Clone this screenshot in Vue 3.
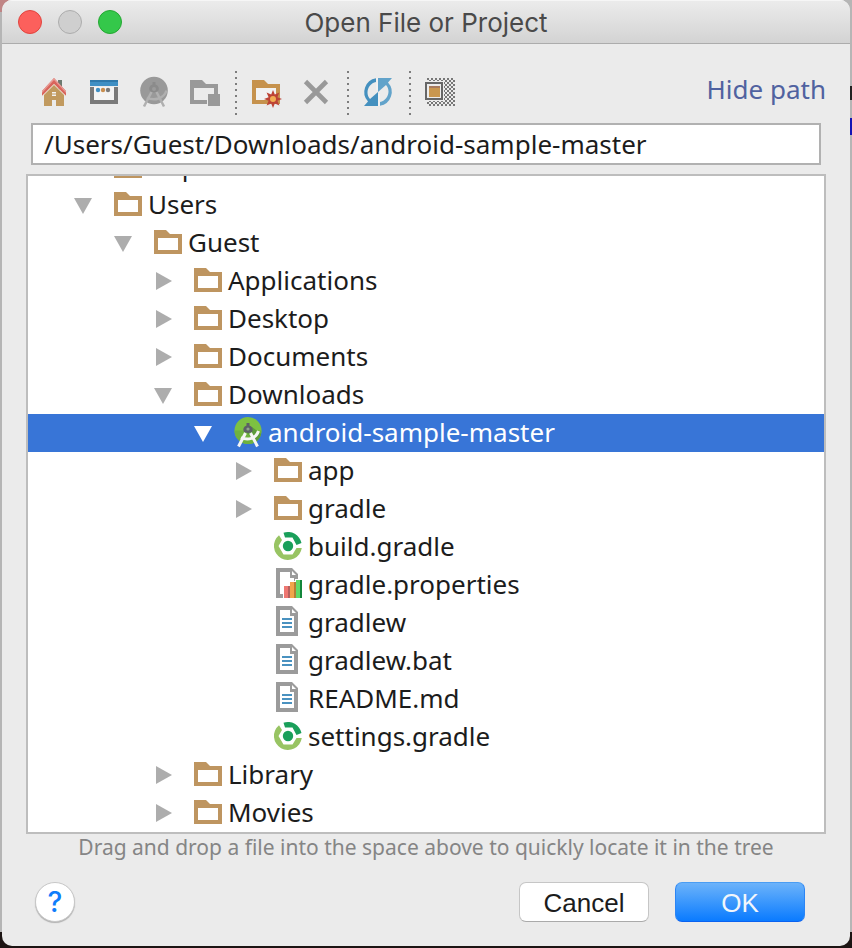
<script setup>
import { ref } from 'vue'

const path = ref('/Users/Guest/Downloads/android-sample-master')
const pathVisible = ref(true)

const tools = [
  { icon: 'home', label: 'Home directory' },
  { icon: 'desktop', label: 'Desktop directory' },
  { icon: 'studio', label: 'Project directory', disabled: true },
  { icon: 'module', label: 'Module directory', disabled: true },
  { separator: true },
  { icon: 'newfolder', label: 'New folder' },
  { icon: 'delete', label: 'Delete' },
  { separator: true },
  { icon: 'refresh', label: 'Refresh' },
  { separator: true },
  { icon: 'hidden', label: 'Show hidden files' }
]

const rows = [
  { name: 'tmp', icon: 'folder', depth: 0 },
  { name: 'Users', icon: 'folder', depth: 0, state: 'open' },
  { name: 'Guest', icon: 'folder', depth: 1, state: 'open' },
  { name: 'Applications', icon: 'folder', depth: 2, state: 'closed' },
  { name: 'Desktop', icon: 'folder', depth: 2, state: 'closed' },
  { name: 'Documents', icon: 'folder', depth: 2, state: 'closed' },
  { name: 'Downloads', icon: 'folder', depth: 2, state: 'open' },
  { name: 'android-sample-master', icon: 'studio', depth: 3, state: 'open', selected: true },
  { name: 'app', icon: 'folder', depth: 4, state: 'closed' },
  { name: 'gradle', icon: 'folder', depth: 4, state: 'closed' },
  { name: 'build.gradle', icon: 'gradle', depth: 4 },
  { name: 'gradle.properties', icon: 'properties', depth: 4 },
  { name: 'gradlew', icon: 'file', depth: 4 },
  { name: 'gradlew.bat', icon: 'file', depth: 4 },
  { name: 'README.md', icon: 'file', depth: 4 },
  { name: 'settings.gradle', icon: 'gradle', depth: 4 },
  { name: 'Library', icon: 'folder', depth: 2, state: 'closed' },
  { name: 'Movies', icon: 'folder', depth: 2, state: 'closed' }
]
</script>

<template>
  <div class="desktop">
    <main class="dialog">
      <header class="titlebar">
        <div class="lights">
          <button class="light close" aria-label="Close"></button>
          <button class="light minimize" aria-label="Minimize" disabled></button>
          <button class="light zoom" aria-label="Zoom"></button>
        </div>
        <h1>Open File or Project</h1>
        <div class="balance"></div>
      </header>

      <div class="toolbar">
        <template v-for="(tool, i) in tools" :key="i">
          <span v-if="tool.separator" class="separator"></span>
          <button v-else class="tool" :aria-label="tool.label" :disabled="tool.disabled">
            <svg v-if="tool.icon === 'home'" class="icon" viewBox="0 0 32 32">
              <path d="M20 4h4v10h-4z" fill="#6d7a70" />
              <path d="M16 8 26 18v12h-8v-6h-4v6H6V18z" fill="#c19a5f" />
              <path d="M14 16h4v1.500h-4zM14 18.500h4V20h-4z" fill="#f2f2f2" />
              <path d="M16 2 28 15v5L16 8 4 20v-5z" fill="#d9655c" />
              <path d="M16 2 28 15v2L16 4 4 17v-2z" fill="#e79a94" />
              <path d="M4 20.500 16 8.500l12 12" fill="none" stroke="#efe7dc" stroke-width="1" />
            </svg>
            <svg v-else-if="tool.icon === 'desktop'" class="icon" viewBox="0 0 32 32">
              <path d="M6 11h20v13H6z" fill="#f4f4f4" />
              <path d="M2 11h4v13h20V11h4v17H2z" fill="#7a7a7a" />
              <path d="M2 4h28v6H2z" fill="#3f8fc4" />
              <path d="M2 4h28v2H2z" fill="#2f78aa" />
              <circle cx="10" cy="14" r="2.200" fill="#3f8fc4" />
              <circle cx="15" cy="14" r="2.200" fill="#c98f50" />
              <circle cx="20" cy="14" r="2.200" fill="#7a7a7a" />
            </svg>
            <svg v-else-if="tool.icon === 'studio'" class="icon" viewBox="0 0 32 32">
              <circle cx="16" cy="14.500" r="13.800" fill="#999" />
              <path d="M14.500 6h3v2.500a4.500 4.500 0 0 1 2.500 7l-4 1-4-1a4.500 4.500 0 0 1 2.500-7z" fill="#8b8b8b" />
              <path d="M13.500 16 6 30.500M18.500 16 26 30.500M9 21.500c7 4 17 1 19.500-7" fill="none" stroke="#b0b0b0" stroke-width="2.500" />
              <circle cx="16" cy="13" r="2" fill="#9b9b9b" />
            </svg>
            <svg v-else-if="tool.icon === 'module'" class="icon" viewBox="0 0 32 32">
              <path d="M2 4h12l4 4h12v10h-4v-6H6v12h13v4H2z" fill="#999" />
              <path d="M20 18h12v12H20z" fill="#999" />
            </svg>
            <svg v-else-if="tool.icon === 'newfolder'" class="icon" viewBox="0 0 32 32">
              <path d="M6 12h20v12H6z" fill="#f2f2f2" />
              <path d="M2 4h12l4 4h12v20H2zM6 12v12h20V12z" fill="#c6924d" fill-rule="evenodd" />
              <path d="m23 14 1.800 4.600L29.400 16.600l-2 4.600L32 23l-4.600 1.800 2 4.600-4.600-2L23 32l-1.800-4.600-4.600 2 2-4.600L14 23l4.600-1.800-2-4.600 4.600 2z" fill="#bd4335" />
              <circle cx="23" cy="23" r="3" fill="#f2ad53" />
            </svg>
            <svg v-else-if="tool.icon === 'delete'" class="icon" viewBox="0 0 32 32">
              <path d="m5.500 5.500 21 21M26.500 5.500l-21 21" stroke="#999" stroke-width="4.600" />
            </svg>
            <svg v-else-if="tool.icon === 'refresh'" class="icon" viewBox="0 0 32 32">
              <path d="M14 2.200V6C9 7 5.500 11.500 5.500 16.500c0 2.500.8 4.500 2.500 6.500l8-7v14H2l4-4.500A14 14 0 0 1 14 2.200z" fill="#4490bf" />
              <path d="M18 29.800V26c5-1 8.500-5.500 8.500-10.500 0-2.500-.8-4.500-2.500-6.500l-8 7V2h14l-4 4.500A14 14 0 0 1 18 29.800z" fill="#62a3ca" />
              <path d="M15 2v12M17 18v12" stroke="#f3f3f3" stroke-width="1.500" />
            </svg>
            <svg v-else class="icon" viewBox="0 0 32 32">
              <defs>
                <pattern id="checks" width="4" height="4" x="3" y="2" patternUnits="userSpaceOnUse">
                  <path d="M0 0h2v2H0zM2 2h2v2H2z" fill="#777" />
                </pattern>
              </defs>
              <path d="M3 2h28v28H3z" fill="url(#checks)" />
              <path d="M0 5h20v20H0z" fill="#ececec" />
              <path d="M2 7h16v16H2z" fill="#ececec" stroke="#666" stroke-width="2" />
              <path d="M5 10h11v11H5z" fill="#c9974f" />
              <path d="M5 10h11v2H5z" fill="#a87b5e" />
            </svg>
          </button>
        </template>
        <a class="toggle-path" href="#" @click.prevent="pathVisible = !pathVisible">Hide path</a>
      </div>

      <input v-if="pathVisible" v-model="path" class="path" type="text" aria-label="Path" spellcheck="false" />

      <ul class="tree" role="tree" aria-label="Files">
        <li
          v-for="row in rows"
          :key="row.name"
          class="row"
          :class="[{ selected: row.selected }, 'depth-' + row.depth]"
          role="treeitem"
          :aria-selected="!!row.selected"
        >
          <button v-if="row.state" class="arrow" :aria-label="'Toggle ' + row.name">
            <svg viewBox="0 0 18 18">
              <path v-if="row.state === 'open'" d="M0 2h18L9 18z" fill="currentColor" />
              <path v-else d="M2 0v18l16-9z" fill="currentColor" />
            </svg>
          </button>
          <span v-else class="arrow"></span>

          <svg v-if="row.icon === 'folder'" class="icon" viewBox="0 0 32 32">
            <path d="M2 3h12l4 4h12v20H2zM6 11v12h20V11z" fill="#be9560" fill-rule="evenodd" />
          </svg>
          <svg v-else-if="row.icon === 'studio'" class="icon" viewBox="0 0 32 32">
            <circle cx="16" cy="13.500" r="13.500" fill="#7dc142" />
            <path d="M2.500 13.500a13.500 13.500 0 0 0 27 0z" fill="#6fb23d" />
            <path d="m14 15 10 10a13.500 13.500 0 0 0 5-8l-9-7z" fill="#5c9b3b" />
            <path d="M14.500 6h3v2.500a4.300 4.300 0 0 1 2.500 6.500l-4 1-4-1a4.300 4.300 0 0 1 2.500-6.500z" fill="#5c6066" />
            <path d="M13.500 16 6.500 29.500M18.500 16 25.500 29.500" fill="none" stroke="#f5f5f5" stroke-width="3" />
            <path d="M9 20.500c7 3.500 15 1 17.500-6.500" fill="none" stroke="#f5f5f5" stroke-width="3" />
            <circle cx="16" cy="12" r="1.600" fill="#8fa28a" />
          </svg>
          <svg v-else-if="row.icon === 'gradle'" class="icon" viewBox="0 0 32 32">
            <path d="M7 4.200A14 14 0 1 0 29.800 17h-5.300l-4 6.500h-9L6.500 15l3.500-6z" fill="#98c463" />
            <path d="M11.500 1.700A14 14 0 0 1 29.500 12L24.500 14 20.500 6.500H13z" fill="#1a9f5a" />
            <circle cx="16" cy="15" r="5.200" fill="#1a9f5a" />
          </svg>
          <svg v-else class="icon" viewBox="0 0 32 32">
            <path d="M4-1h16l6 6v24H4zM8 3v22h14V9h-4V3z" fill="#9b9b9b" fill-rule="evenodd" />
            <path d="M20 2v4h4z" fill="#fff" />
            <path v-if="row.icon === 'file'" d="M10 11h10v2H10zM10 15h10v2H10zM10 19h10v2H10z" fill="#4a92c0" />
            <g v-else>
              <path d="M11 16h6v-4h6v-2h4v19H11z" fill="#fff" />
              <path d="M12 17h6v12h-6z" fill="#ee7772" />
              <path d="M16 17h2v12h-2z" fill="#b5605e" />
              <path d="M18 13h6v16h-6z" fill="#f0a649" />
              <path d="M22 13h2v16h-2z" fill="#b47f35" />
              <path d="M24 11h6v18h-6z" fill="#5fdb68" />
              <path d="M28 11h2v18h-2z" fill="#12863a" />
            </g>
          </svg>
          <span class="name">{{ row.name }}</span>
        </li>
      </ul>

      <p class="hint">Drag and drop a file into the space above to quickly locate it in the tree</p>

      <footer class="actions">
        <button class="help" aria-label="Help">?</button>
        <button class="btn">Cancel</button>
        <button class="btn primary">OK</button>
      </footer>
    </main>
  </div>
</template>

<style>
body {
  margin: 0;
}
</style>

<style scoped>
.desktop {
  box-sizing: border-box;
  height: 100vh;
  min-height: 480px;
  padding: 0 2px;
  display: flex;
  background:
    linear-gradient(#1c1413, #1c1413) bottom / 100% 16px no-repeat,
    linear-gradient(#c08585, #c08585) top left / 12px 12px no-repeat,
    linear-gradient(#222, #222) right 0 top 86px / 2px 14px no-repeat,
    linear-gradient(#1414b4, #1414b4) right 0 top 118px / 2px 17px no-repeat,
    #b5b5b5;
}

.dialog {
  flex: 1;
  min-width: 0;
  margin-bottom: 2px;
  display: flex;
  flex-direction: column;
  overflow: hidden;
  border-radius: 10px;
  background: #ebebeb;
  color: #1c1c1c;
  font-family: "Noto Sans", "Open Sans", sans-serif;
  font-size: 26px;
}

button {
  padding: 0;
  border: 0;
  background: none;
  font: inherit;
  color: inherit;
}

.titlebar {
  display: flex;
  align-items: center;
  height: 43px;
  padding: 0 16px;
  border-bottom: 1px solid #acacac;
  background: linear-gradient(#ececec, #d3d3d3);
  box-shadow: inset 0 1px #f6f6f6;
}

.lights,
.balance {
  display: flex;
  gap: 16px;
  width: 104px;
}

.light {
  box-sizing: border-box;
  width: 24px;
  height: 24px;
  border: 1px solid #e0443e;
  border-radius: 50%;
  background: #fc605c;
}

.minimize {
  border-color: #acacac;
  background: #cfcfcf;
}

.zoom {
  border-color: #24a732;
  background: #34c84a;
}

h1 {
  flex: 1;
  margin: 0;
  padding-top: 2px;
  text-align: center;
  font-family: Inter, sans-serif;
  font-size: 26px;
  line-height: 32px;
  font-weight: 400;
  color: #4a4a4a;
}

.toolbar {
  display: flex;
  align-items: center;
  height: 62px;
  margin: 17px 24px 0 27px;
}

.tool {
  display: grid;
  place-items: center;
  width: 50px;
  height: 44px;
}

.icon {
  flex: none;
  width: 32px;
  height: 32px;
  overflow: visible;
}

.toolbar .icon {
  display: block;
}

.separator {
  width: 2px;
  height: 44px;
  margin: 2px 4px 0 6px;
  background: repeating-linear-gradient(#7d7d7d 0 2px, transparent 2px 6px);
}

.toggle-path {
  margin-left: auto;
  padding-bottom: 7px;
  color: #5062a0;
  text-decoration: none;
}

.path {
  box-sizing: border-box;
  height: 42px;
  margin: 0 29px 9px;
  padding: 0 11px;
  border: 2px solid #b1b1b1;
  border-radius: 0;
  outline: 0;
  background: #fff;
  color: inherit;
  font: inherit;
}

.tree {
  flex: 1;
  min-height: 0;
  display: flex;
  flex-direction: column;
  justify-content: flex-end;
  margin: 0 24px;
  padding: 0;
  overflow: hidden;
  border: 2px solid #bdbdbd;
  background: #fff;
  list-style: none;
}

.row {
  flex: none;
  display: flex;
  align-items: center;
  height: 38px;
  padding-left: 46px;
}

.depth-1 { padding-left: 86px; }
.depth-2 { padding-left: 126px; }
.depth-3 { padding-left: 166px; }
.depth-4 { padding-left: 206px; }

.arrow {
  flex: none;
  width: 18px;
  height: 18px;
  margin-right: 20px;
  color: #adadad;
}

.arrow svg {
  display: block;
}

.name {
  padding: 0 0 2px 4px;
  line-height: 36px;
  white-space: nowrap;
}

.selected,
.selected .arrow {
  color: #fff;
}

.selected {
  background: #3875d7;
}

.hint {
  margin: 0;
  text-align: center;
  font-size: 21px;
  line-height: 26px;
  color: #858585;
}

.actions {
  display: flex;
  align-items: center;
  gap: 26px;
  padding: 22px 45px 24px 33px;
}

.help {
  width: 40px;
  height: 40px;
  margin-right: auto;
  border: 1px solid #c8c8c8;
  border-radius: 50%;
  background: #fff;
  box-shadow: 0 1px 1px #b0b0b0;
  color: #0f7dfb;
  font-family: Inter, sans-serif;
  font-size: 28px;
  font-weight: 500;
}

.btn {
  width: 130px;
  height: 40px;
  padding-top: 2px;
  border: 1px solid #c6c6c6;
  border-bottom-color: #aaa;
  border-radius: 7px;
  background: #fff;
  font-family: "Liberation Sans", Arial, sans-serif;
}

.primary {
  border-color: #4a9df3 #2b85f5 #0a62f0;
  background: linear-gradient(#6cb3fa, #0a7bff);
  color: #f2f6fb;
}
</style>
